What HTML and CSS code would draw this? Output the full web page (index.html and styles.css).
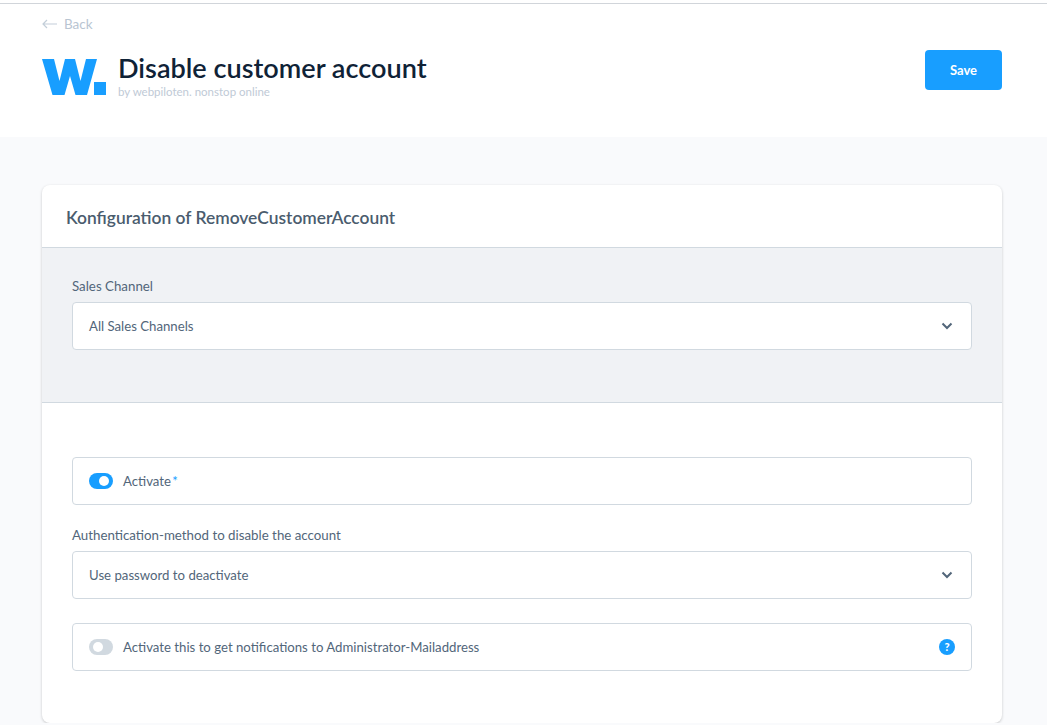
FILE: index.html
```html
<!DOCTYPE html>
<html lang="en">
<head>
    <meta charset="UTF-8">
    <meta name="viewport" content="width=device-width, initial-scale=1.0">
    <title>Disable customer account</title>
    <link rel="stylesheet" href="styles.css">
</head>
<body>
    <!-- Page header -->
    <header class="page-head">
        <a class="back" href="#">
            <svg class="back-icon" width="16" height="10" viewBox="0 0 16 10"><path d="M15 5H1M5 1L1 5l4 4" fill="none" stroke="#c3ced9" stroke-width="1.2"/></svg>
            <span>Back</span>
        </a>
        <div class="head-row">
            <svg class="logo" width="64" height="36" viewBox="0 0 64 36">
                <path d="M0 0h12l5.500 22L23 0h10l5.500 22L44 0h11L45 36H33.500L28 17l-5.500 19H10.500z" fill="#189eff"/>
                <rect x="52" y="23" width="12" height="13" fill="#189eff"/>
            </svg>
            <div class="title-block">
                <h1>Disable customer account</h1>
                <p>by webpiloten. nonstop online</p>
            </div>
            <button class="save">Save</button>
        </div>
    </header>

    <main class="content">
        <section class="card">
            <h2 class="card-title">Konfiguration of RemoveCustomerAccount</h2>

            <!-- Sales channel picker -->
            <div class="channel">
                <label class="field-label">Sales Channel</label>
                <div class="box select">
                    <span>All Sales Channels</span>
                    <svg class="chevron" width="12" height="8" viewBox="0 0 12 8"><path d="M1.500 1.500L6 6l4.500-4.500" fill="none" stroke="#52667a" stroke-width="2"/></svg>
                </div>
            </div>

            <!-- Settings -->
            <div class="settings">
                <div class="box toggle-row">
                    <span class="switch on"></span>
                    <span>Activate <em class="req">*</em></span>
                </div>
                <label class="field-label">Authentication-method to disable the account</label>
                <div class="box select">
                    <span>Use password to deactivate</span>
                    <svg class="chevron" width="12" height="8" viewBox="0 0 12 8"><path d="M1.500 1.500L6 6l4.500-4.500" fill="none" stroke="#52667a" stroke-width="2"/></svg>
                </div>
                <div class="box toggle-row notify">
                    <span class="switch"></span>
                    <span>Activate this to get notifications to Administrator-Mailaddress</span>
                    <span class="help">?</span>
                </div>
            </div>
        </section>
    </main>
</body>
</html>
```

FILE: styles.css
```css
/* General body styling */
body {
    font-family: Lato, "Noto Sans", sans-serif;
    background-color: #f9fafc;
    color: #52667a;
    margin: 0;
    padding: 0;
}

/* Page header */
.page-head {
    height: 137px;
    box-sizing: border-box;
    background-color: #fff;
    padding: 0 45px 0 42px;
    position: relative;
}

.page-head::before {
    content: "";
    display: block;
    height: 1px;
    margin: 0 -45px 0 -42px;
    position: relative;
    top: 3px;
    background-color: #d1d5da;
}

.back {
    display: flex;
    align-items: center;
    gap: 6px;
    padding-top: 14px;
    height: 17px;
    font-size: 13.5px;
    color: #b9c5d2;
    text-decoration: none;
}

.head-row {
    display: flex;
    align-items: flex-start;
    margin-top: 18px;
}

.logo {
    margin-top: 9px;
    flex: none;
}

.title-block {
    margin-left: 12px;
    flex: 1;
}

h1 {
    margin: 2px 0 0;
    font-size: 27.1px;
    line-height: 32px;
    font-weight: 600;
    color: #0f2236;
}

.title-block p {
    margin: 0;
    font-size: 11.5px;
    line-height: 16px;
    color: #c0cad6;
}

.save {
    width: 77px;
    height: 40px;
    border: none;
    border-radius: 4px;
    background-color: #189eff;
    color: #fff;
    font-family: inherit;
    font-size: 13px;
    font-weight: 700;
}

/* Main card */
.content {
    padding: 48px 45px 0 42px;
}

.card {
    background-color: #fff;
    border-radius: 8px;
    box-shadow: 0 1px 3px rgba(0, 0, 0, 0.2);
    height: 538px;
    overflow: hidden;
}

.card-title {
    margin: 0;
    height: 63px;
    padding-left: 24px;
    box-sizing: border-box;
    font-size: 17.4px;
    line-height: 66px;
    font-weight: 600;
    color: #4a5c6e;
    border-bottom: 1px solid #d1d9e0;
}

.channel {
    height: 155px;
    box-sizing: border-box;
    padding: 29px 30px 0;
    background-color: #f0f2f5;
    border-bottom: 1px solid #d1d9e0;
}

.settings {
    padding: 54px 30px 0;
}

.field-label {
    display: block;
    font-size: 13.3px;
    line-height: 18px;
    margin-bottom: 7px;
}

.box {
    display: flex;
    align-items: center;
    height: 48px;
    box-sizing: border-box;
    padding: 0 16px;
    background-color: #fff;
    border: 1px solid #d1d9e0;
    border-radius: 4px;
    font-size: 13.2px;
}

.select {
    justify-content: space-between;
}

.chevron {
    margin-right: 2px;
}

.toggle-row {
    gap: 10px;
    margin-bottom: 21px;
}

.notify {
    margin: 24px 0 0;
}

.switch {
    width: 24px;
    height: 16px;
    border-radius: 8px;
    background-color: #d1d9e0;
    position: relative;
}

.switch::after {
    content: "";
    position: absolute;
    left: 4px;
    top: 3px;
    width: 10px;
    height: 10px;
    border-radius: 50%;
    background-color: #fff;
}

.switch.on {
    background-color: #189eff;
}

.switch.on::after {
    left: 10px;
}

.req {
    font-style: normal;
    color: #189eff;
    margin-left: -2px;
}

.help {
    width: 16px;
    height: 16px;
    margin-left: auto;
    border-radius: 50%;
    background-color: #189eff;
    color: #fff;
    font-size: 11px;
    font-weight: 900;
    line-height: 16px;
    text-align: center;
}
```
